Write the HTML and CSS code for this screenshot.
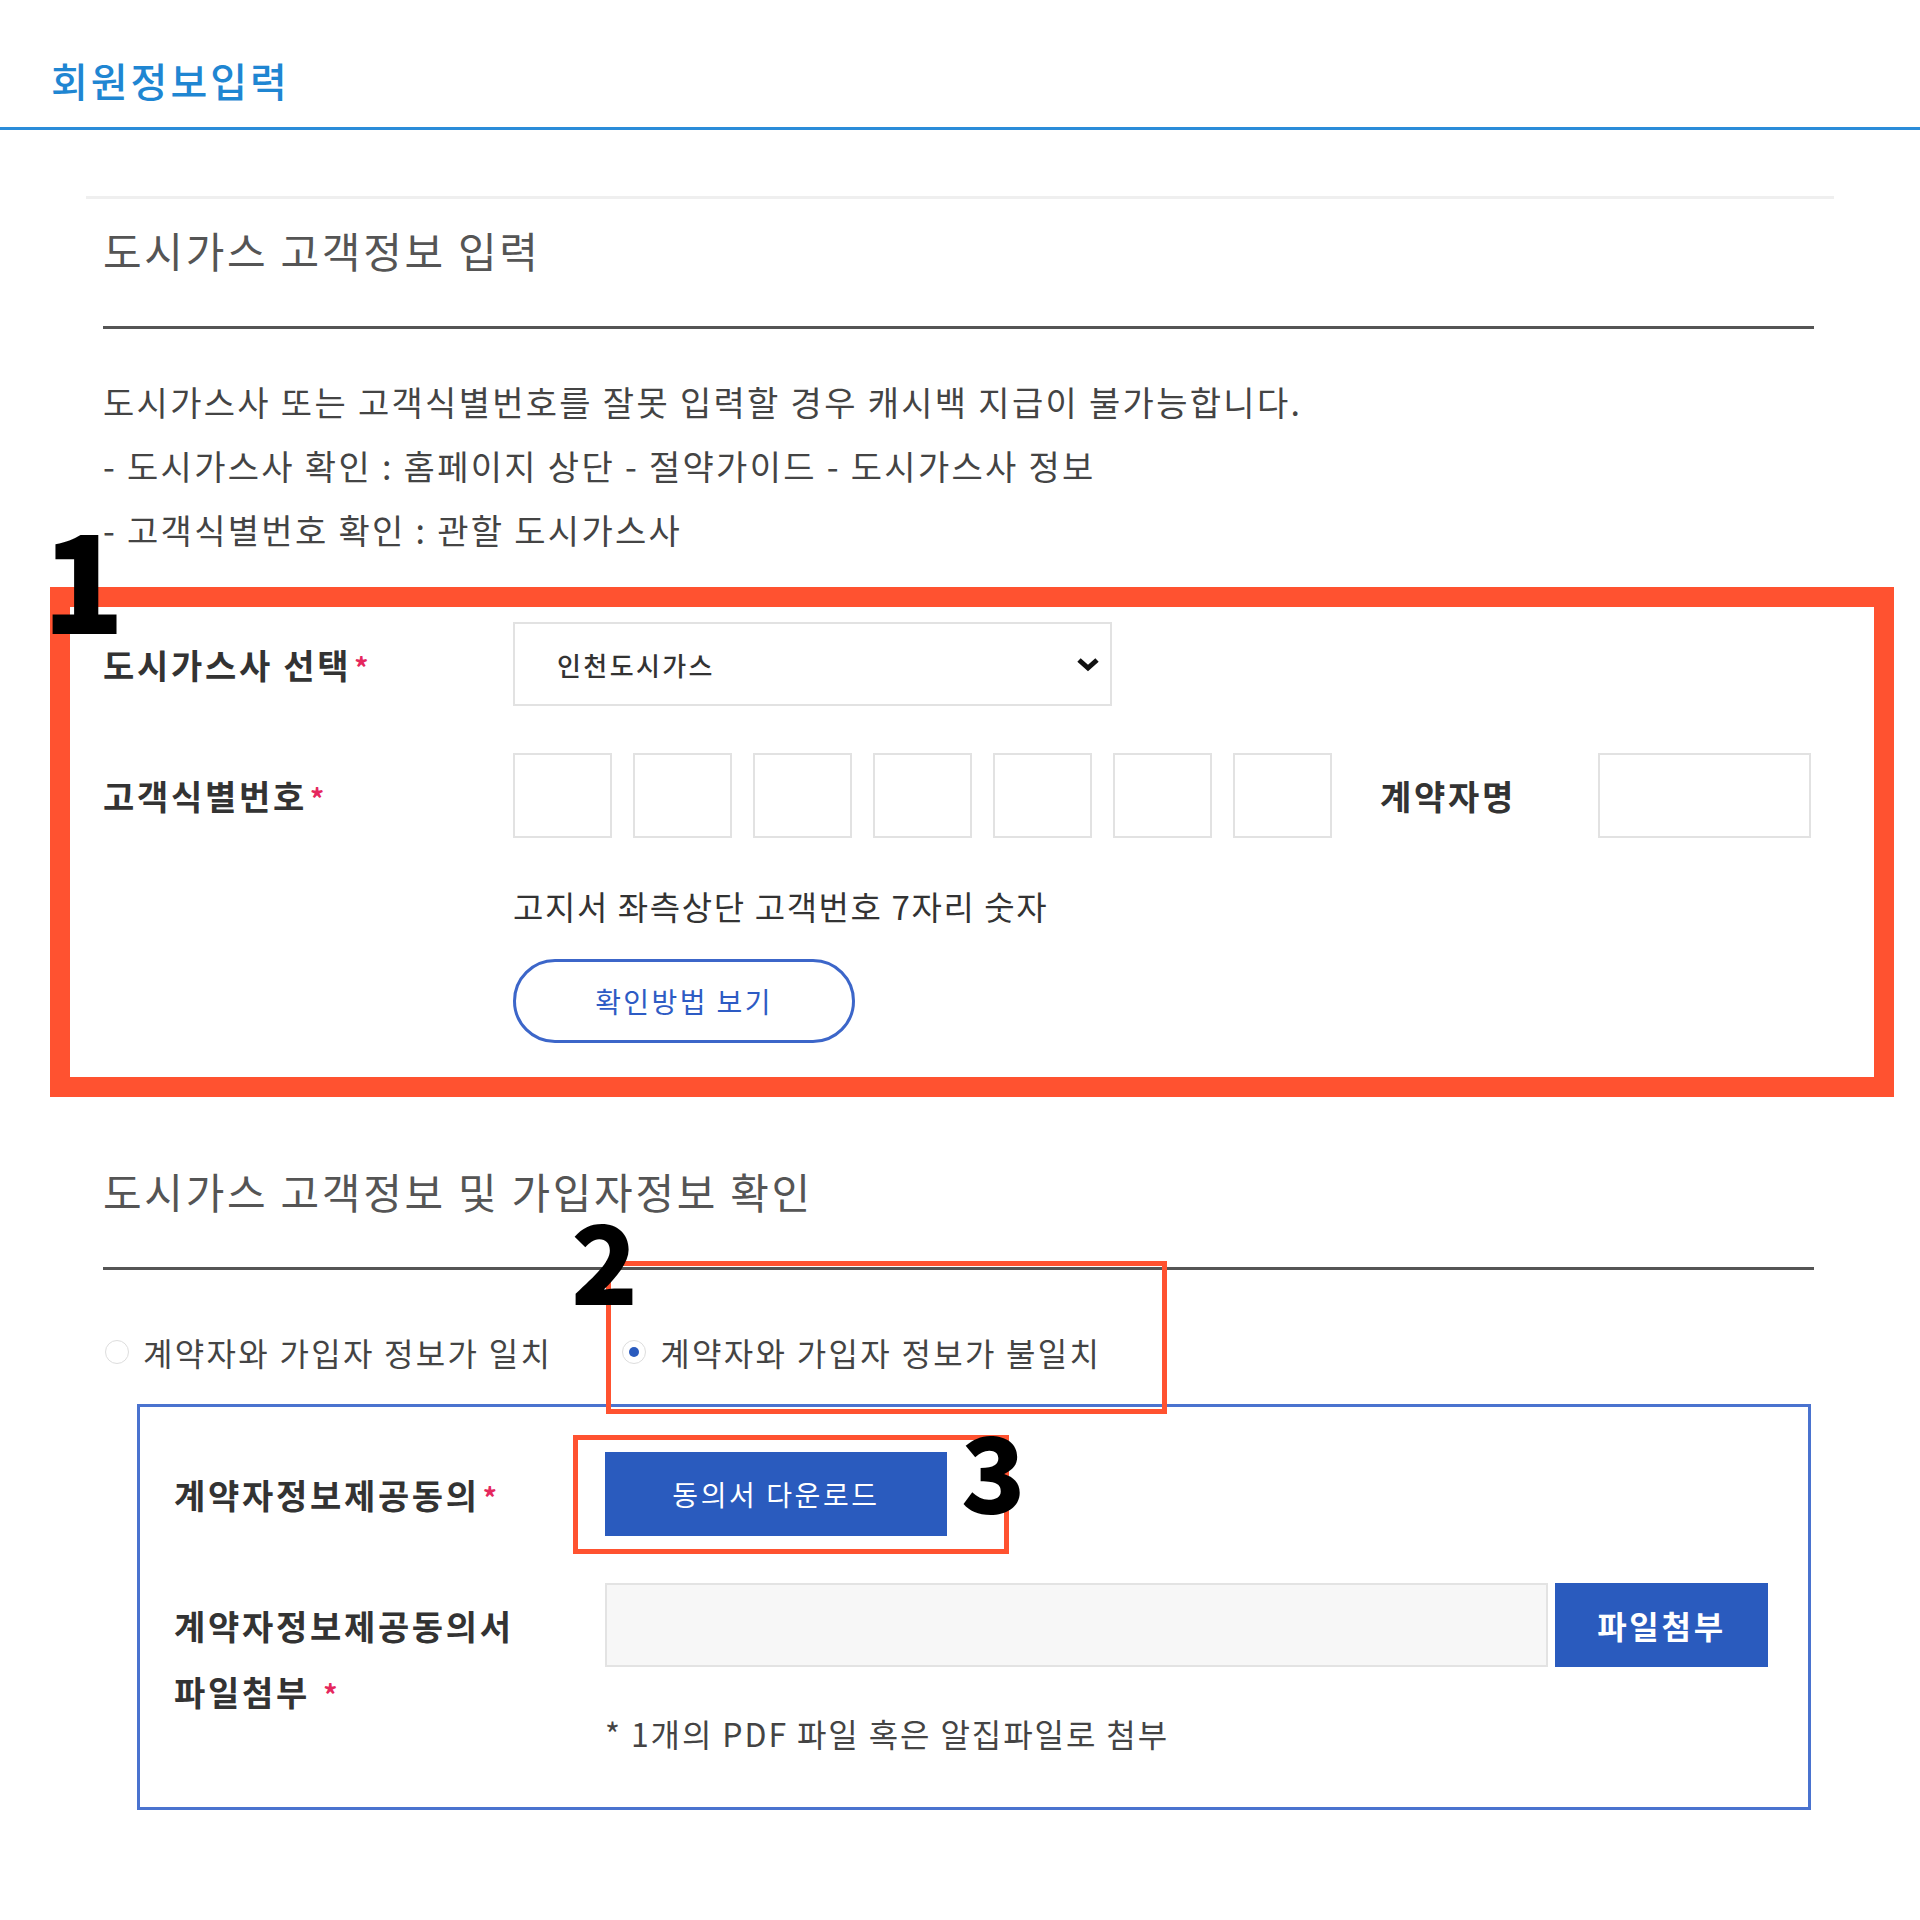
FILE: index.html
```html
<!DOCTYPE html>
<html>
<head lang="ko">
    <meta charset="UTF-8">
    <title>회원정보입력</title>
    <link rel="stylesheet" href="styles.css">
</head>
<body>
    <header class="top">
        <h1>회원정보입력</h1>
    </header>
    <div class="page">
        <!-- 도시가스 고객정보 입력 -->
        <section class="sec">
            <h2 class="sec-tit">도시가스 고객정보 입력</h2>
            <ul class="notice">
                <li>도시가스사 또는 고객식별번호를 잘못 입력할 경우 캐시백 지급이 불가능합니다.</li>
                <li>- 도시가스사 확인 : 홈페이지 상단 - 절약가이드 - 도시가스사 정보</li>
                <li>- 고객식별번호 확인 : 관할 도시가스사</li>
            </ul>
            <div class="form">
                <div class="row">
                    <label class="lbl">도시가스사 선택<em>*</em></label>
                    <div class="select">
                        <span>인천도시가스</span>
                        <svg width="24" height="15" viewBox="0 0 24 15"><polyline points="3,3 12,11 21,3" fill="none" stroke="#111" stroke-width="5"/></svg>
                    </div>
                </div>
                <div class="row row-num">
                    <label class="lbl">고객식별번호<em>*</em></label>
                    <div class="nums">
                        <input type="text" class="ipt"><input type="text" class="ipt"><input type="text" class="ipt"><input type="text" class="ipt"><input type="text" class="ipt"><input type="text" class="ipt"><input type="text" class="ipt">
                    </div>
                    <label class="lbl-name">계약자명</label>
                    <input type="text" class="ipt name">
                </div>
                <p class="hint">고지서 좌측상단 고객번호 7자리 숫자</p>
                <a href="javascript:void(0);" class="btn-line">확인방법 보기</a>
            </div>
        </section>
        <!-- 고객정보 및 가입자정보 확인 -->
        <section class="sec sec2">
            <h2 class="sec-tit">도시가스 고객정보 및 가입자정보 확인</h2>
            <div class="radios">
                <span class="rd"><i class="dot"></i>계약자와 가입자 정보가 일치</span>
                <span class="rd rd2"><i class="dot on"></i>계약자와 가입자 정보가 불일치</span>
            </div>
            <div class="box">
                <div class="brow">
                    <label class="blbl">계약자정보제공동의<em>*</em></label>
                    <a href="javascript:void(0);" class="btn-blue">동의서 다운로드</a>
                </div>
                <div class="brow brow2">
                    <label class="blbl two">계약자정보제공동의서<br>파일첨부 <em>*</em></label>
                    <div class="fcol">
                        <div class="file">
                            <input type="text" class="ftxt">
                            <a href="javascript:void(0);" class="btn-file">파일첨부</a>
                        </div>
                        <p class="fnote">* 1개의 PDF 파일 혹은 알집파일로 첨부</p>
                    </div>
                </div>
            </div>
        </section>
    </div>

    <!-- 설명용 표시 -->
    <div class="mark mark1"></div>
    <div class="mark mark2"></div>
    <div class="mark mark3"></div>
    <span class="tag tag1">1</span>
    <span class="tag tag2">2</span>
    <span class="tag tag3">3</span>
</body>
</html>
```

FILE: styles.css
```css
body{
    margin: 0;
    position: relative;
    font-family: "Noto Sans CJK KR", "Noto Sans", sans-serif;
    color: #333333;
}
ul{
    margin: 0;
    padding: 0;
    list-style-type: none;
}
p{
    margin: 0;
}
a{
    text-decoration: none;
}
em{
    font-style: normal;
    color: #e5285e;
    font-size: 28px;
    font-weight: 700;
    margin-left: 3px;
}
.top{
    height: 130px;
    box-sizing: border-box;
    padding: 56px 0 0 51px;
    border-bottom: 3px solid #2a8cd9;
}
.top h1{
    margin: 0;
    font-size: 40px;
    line-height: 48px;
    font-weight: 500;
    letter-spacing: 3px;
    color: #1f86d2;
}
.page{
    margin: 66px 0 0 86px;
    width: 1748px;
    box-sizing: border-box;
    padding: 0 20px 0 17px;
    border-top: 3px solid #efefef;
}
.sec-tit{
    margin: 0;
    padding: 21px 0 46px;
    font-size: 42px;
    line-height: 60px;
    font-weight: 400;
    letter-spacing: 2.7px;
    color: #555555;
    border-bottom: 3px solid #555555;
}
.notice{
    margin-top: 41px;
    font-size: 34px;
    line-height: 64px;
    letter-spacing: 2.3px;
    color: #444444;
}
.form{
    margin-top: 60px;
}
.row{
    display: flex;
    align-items: center;
}
.lbl{
    width: 410px;
    font-size: 34px;
    font-weight: 700;
    letter-spacing: 2.7px;
    color: #333333;
}
.select{
    width: 599px;
    height: 84px;
    box-sizing: border-box;
    border: 2px solid #e2e2e2;
    padding: 0 10px 0 42px;
    display: flex;
    align-items: center;
    justify-content: space-between;
    font-size: 26px;
    font-weight: 500;
    letter-spacing: 2.4px;
    color: #333333;
}
.row-num{
    margin-top: 47px;
}
.nums{
    display: flex;
    gap: 21px;
}
.ipt{
    width: 99px;
    height: 85px;
    box-sizing: border-box;
    border: 2px solid #e2e2e2;
    margin: 0;
    padding: 0;
    background: #ffffff;
}
.lbl-name{
    width: 218px;
    margin-left: 48px;
    font-size: 34px;
    font-weight: 700;
    letter-spacing: 2.7px;
    color: #333333;
}
.name{
    width: 213px;
}
.hint{
    margin: 48px 0 0 410px;
    font-size: 33px;
    line-height: 40px;
    letter-spacing: 1.6px;
    color: #333333;
}
.btn-line{
    margin: 33px 0 0 410px;
    width: 342px;
    height: 84px;
    box-sizing: border-box;
    border: 3px solid #3c66c9;
    border-radius: 42px;
    display: flex;
    align-items: center;
    justify-content: center;
    font-size: 28px;
    letter-spacing: 2.4px;
    color: #2d5bc4;
}
.sec2{
    margin-top: 97px;
}
.radios{
    margin-top: 62px;
    display: flex;
    align-items: center;
    font-size: 32px;
    line-height: 40px;
    letter-spacing: 2.3px;
    color: #444444;
}
.rd{
    display: flex;
    align-items: center;
    margin-left: 2px;
}
.rd2{
    margin-left: 70px;
}
.dot{
    width: 24px;
    height: 24px;
    box-sizing: border-box;
    border: 1px solid #dddddd;
    border-radius: 50%;
    margin-right: 14px;
    display: flex;
    align-items: center;
    justify-content: center;
}
.dot.on:after{
    content: '';
    width: 10px;
    height: 10px;
    border-radius: 50%;
    background-color: #2a5bbe;
}
.box{
    margin: 32px 0 0 34px;
    width: 1674px;
    box-sizing: border-box;
    border: 3px solid #4a73cf;
    padding: 45px 0 54px 34px;
}
.brow{
    display: flex;
    align-items: center;
}
.brow2{
    margin-top: 47px;
    align-items: flex-start;
}
.blbl{
    width: 431px;
    font-size: 34px;
    font-weight: 700;
    letter-spacing: 2.7px;
    color: #333333;
}
.blbl.two{
    padding-top: 10px;
    line-height: 66px;
}
.btn-blue{
    width: 342px;
    height: 84px;
    display: flex;
    align-items: center;
    justify-content: center;
    background-color: #2a5bbe;
    color: #ffffff;
    font-size: 28px;
    letter-spacing: 2.6px;
}
.file{
    display: flex;
    gap: 7px;
}
.ftxt{
    width: 943px;
    height: 84px;
    box-sizing: border-box;
    margin: 0;
    border: 2px solid #e3e3e3;
    background-color: #f7f7f7;
}
.btn-file{
    width: 213px;
    height: 84px;
    display: flex;
    align-items: center;
    justify-content: center;
    background-color: #2a5bbe;
    color: #ffffff;
    font-size: 32px;
    font-weight: 700;
    letter-spacing: 2.7px;
}
.fnote{
    margin-top: 46px;
    font-size: 32px;
    line-height: 40px;
    letter-spacing: 1.9px;
    color: #444444;
}
.mark{
    position: absolute;
    box-sizing: border-box;
    border: 5px solid #ff5230;
}
.mark1{
    left: 50px;
    top: 587px;
    width: 1844px;
    height: 510px;
    border-width: 20px;
}
.mark2{
    left: 606px;
    top: 1261px;
    width: 561px;
    height: 153px;
}
.mark3{
    left: 573px;
    top: 1435px;
    width: 436px;
    height: 119px;
}
.tag{
    position: absolute;
    font-family: "Noto Sans CJK KR", sans-serif;
    font-weight: 900;
    line-height: 1;
    color: #000000;
}
.tag1{
    left: 42px;
    top: 507px;
    font-size: 136px;
}
.tag2{
    left: 571px;
    top: 1202px;
    font-size: 110px;
}
.tag3{
    left: 961px;
    top: 1415px;
    font-size: 106px;
}
```
